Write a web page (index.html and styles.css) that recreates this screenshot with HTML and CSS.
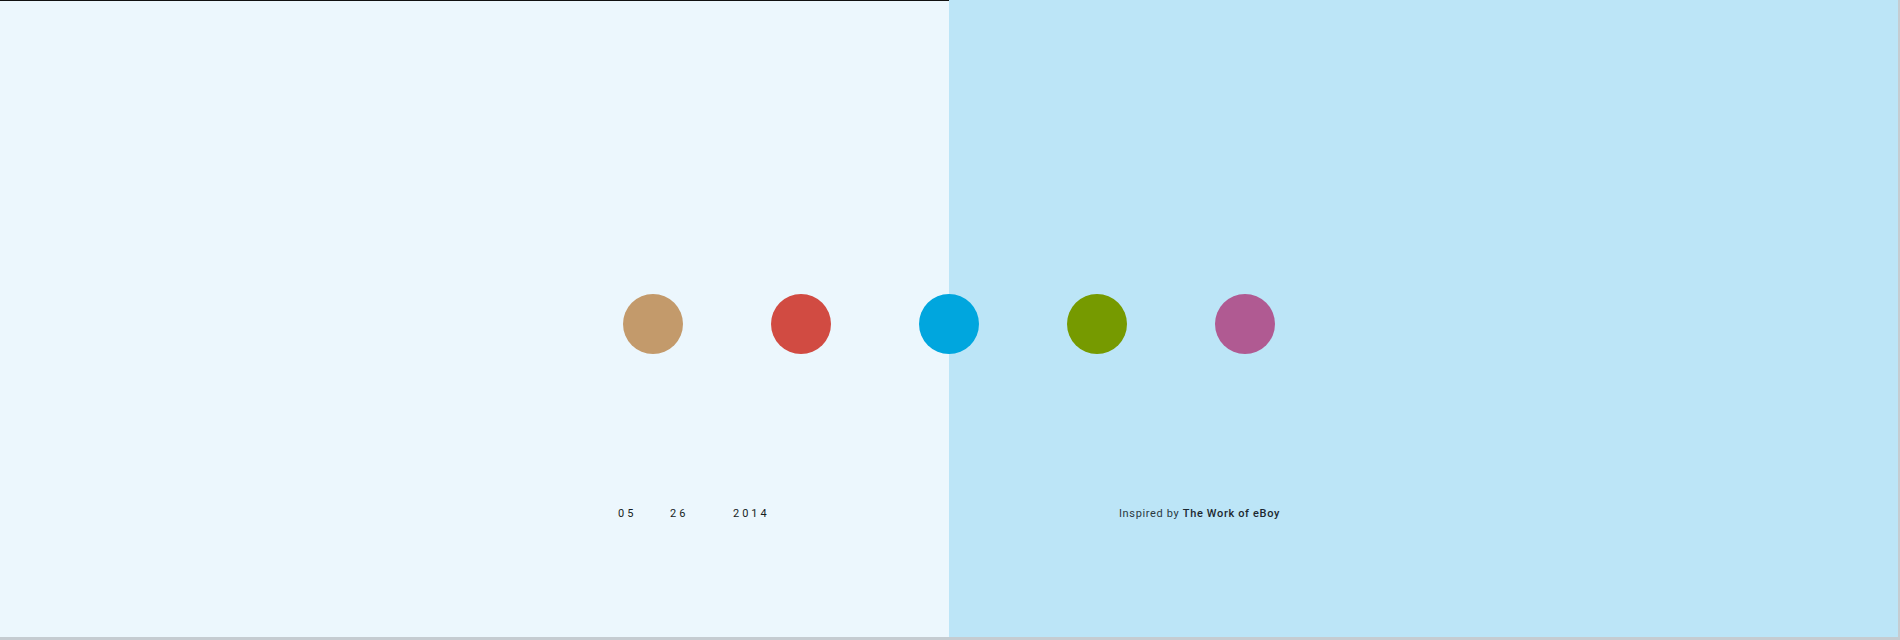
FILE: index.html
```html
<!DOCTYPE html>
<html lang="en">
<head>
<meta charset="utf-8">
<title>Dots</title>
<link rel="stylesheet" href="styles.css">
</head>
<body>
<main class="page">
  <div class="dots">
    <span class="dot dot-tan"></span>
    <span class="dot dot-red"></span>
    <span class="dot dot-blue"></span>
    <span class="dot dot-green"></span>
    <span class="dot dot-purple"></span>
  </div>
  <footer class="info">
    <div class="date">
      <span>05</span>
      <span>26</span>
      <span>2014</span>
    </div>
    <p class="credit">Inspired by <strong>The Work of eBoy</strong></p>
  </footer>
</main>
</body>
</html>
```
FILE: styles.css
```css
html, body {
  margin: 0;
  padding: 0;
  height: 640px;
  background: #c5ccd1;
}
body {
  font-family: Roboto, "Liberation Sans", sans-serif;
  overflow: hidden;
}
.page {
  box-sizing: border-box;
  width: 1898px;
  height: 637px;
  padding-top: 294px;
  background:
    linear-gradient(to right, #111 949px, transparent 949px) top left / 100% 1px no-repeat,
    linear-gradient(to right, #ecf7fd 949px, #bce5f7 949px);
}
.dots {
  display: flex;
  justify-content: center;
  gap: 88px;
}
.dot {
  width: 60px;
  height: 60px;
  border-radius: 50%;
  display: block;
}
.dot-tan { background: #c39a6b; }
.dot-red { background: #d14b42; }
.dot-blue { background: #00a6de; }
.dot-green { background: #769a00; }
.dot-purple { background: #b05a92; }
.info {
  width: 662px;
  margin: 153px auto 0;
  display: flex;
  justify-content: space-between;
  align-items: center;
  font-size: 11px;
  line-height: 14px;
  color: #1f2a30;
}
.date {
  display: grid;
  grid-template-columns: 52px 63px auto;
  letter-spacing: 3px;
  font-weight: 400;
  color: #161e23;
}
.credit {
  margin: 0;
  color: #2a3942;
  letter-spacing: 0.65px;
}
.credit strong {
  font-weight: 500;
  color: #1c2830;
}
```
